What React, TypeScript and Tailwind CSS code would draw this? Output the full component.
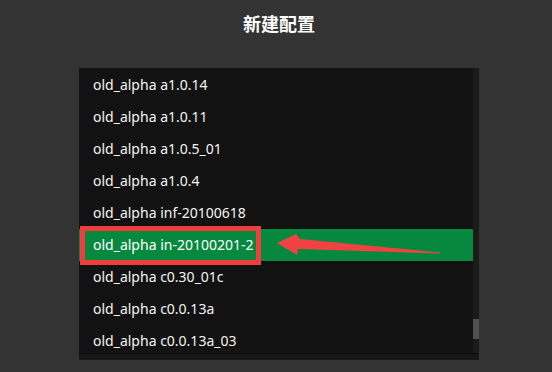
const versions = [
    "old_alpha a1.0.14",
    "old_alpha a1.0.11",
    "old_alpha a1.0.5_01",
    "old_alpha a1.0.4",
    "old_alpha inf-20100618",
    "old_alpha in-20100201-2",
    "old_alpha c0.30_01c",
    "old_alpha c0.0.13a",
    "old_alpha c0.0.13a_03",
]

const selected = "old_alpha in-20100201-2"

function VersionRow({ name }: { name: string }) {
    const active = name === selected
    return (
        <div className={active ? "h-8 flex items-center pl-[14px] pb-[2px] bg-[#06893f] text-white" : "h-8 flex items-center pl-[14px] pb-[2px] text-[#f2f2f2]"}>
            {name}
        </div>
    )
}

export default function App() {
    return (
        <div
            className="w-[552px] h-[372px] bg-[#333333] flex flex-col items-center pl-[6px] overflow-hidden"
            style={{ fontFamily: '"Noto Sans", "Noto Sans CJK SC", sans-serif' }}
        >
            <h1 className="mt-[12px] h-[25px] text-[18px] leading-[25px] font-bold text-white">新建配置</h1>
            <div className="mt-[31px] w-[400px] h-[292px] bg-[#121212] relative flex flex-col">
                <div className="flex h-[285px]">
                    <div className="flex-1 pt-[1px] overflow-hidden text-[14px]">
                        {versions.map((v) => (
                            <VersionRow key={v} name={v} />
                        ))}
                    </div>
                    <div className="w-[6px] bg-[#1b1b1b] flex flex-col pt-[251px]">
                        <div className="h-[20px] bg-[#505050]" />
                    </div>
                </div>
                <div className="h-[7px] bg-[#171717] border-t border-[#0c0c0c]" />

                {/* annotation overlays */}
                <div className="absolute left-[1px] top-[158px] w-[181px] h-[39px] border-[5px] border-[#ef3d3d]" />
                <svg className="absolute left-0 top-0" width="400" height="292" viewBox="0 0 400 292">
                    <polygon
                        points="198,175 217,166 221,171 361,184.5 361,185.5 219,181 218,187"
                        fill="#f04242"
                    />
                </svg>
            </div>
        </div>
    )
}
